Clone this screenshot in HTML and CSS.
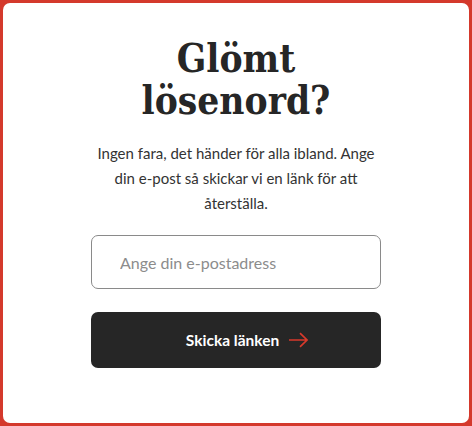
FILE: index.html
```html
<!DOCTYPE html>
<html lang="sv">
  <head>
    <meta charset="UTF-8">
    <title>Glömt lösenord?</title>
    <link rel="stylesheet" href="styles.css">
  </head>
  <body>
    <div class="card">
      <h1>Glömt<br>lösenord?</h1>
      <p class="intro">Ingen fara, det händer för alla ibland. Ange din e-post så skickar vi en länk för att återställa.</p>
      <form class="reset-form">
        <input type="email" id="email" name="email" placeholder="Ange din e-postadress">
        <button type="button">
          Skicka länken
          <svg class="arrow" width="19" height="16" viewBox="0 0 19 16" fill="none" stroke="#d7392b" stroke-width="1.7">
            <path d="M0 8h17.5M11 1.2l7 6.8-7 6.8"/>
          </svg>
        </button>
      </form>
    </div>
  </body>
</html>
```

FILE: styles.css
```css
html, body {
  height: 100%;
}

body {
  background-color: #d4392c;
  font-family: Lato, "Noto Sans", Arial, sans-serif;
  margin: 0;
  padding: 3px;
  box-sizing: border-box;
}

.card {
  background-color: #fff;
  border-radius: 7px;
  height: 100%;
  display: flex;
  flex-direction: column;
  align-items: center;
  padding-top: 35px;
  box-sizing: border-box;
}

h1 {
  color: #262626;
  font-family: "DejaVu Serif Condensed", "DejaVu Serif", serif;
  font-stretch: condensed;
  font-size: 38.5px;
  font-weight: bold;
  line-height: 42px;
  text-align: center;
  margin: 0 0 19px 0;
}

.intro {
  color: #333;
  font-size: 15px;
  line-height: 25px;
  text-align: center;
  width: 290px;
  margin: 0 0 19px 0;
}

.reset-form {
  width: 290px;
}

input[type="email"] {
  border: 1px solid #8a8a8a;
  border-radius: 7px;
  box-sizing: border-box;
  font-family: inherit;
  font-size: 16px;
  height: 54px;
  padding: 0 28px;
  width: 100%;
  color: #333;
}

input::placeholder {
  color: #8c8c8c;
}

button {
  background-color: #262626;
  border: none;
  border-radius: 7px;
  color: #fff;
  cursor: pointer;
  font-family: inherit;
  font-size: 15.5px;
  font-weight: bold;
  height: 56px;
  width: 100%;
  margin-top: 23px;
  padding: 0 0 0 22px;
  display: flex;
  align-items: center;
  justify-content: center;
  gap: 10px;
}
```
